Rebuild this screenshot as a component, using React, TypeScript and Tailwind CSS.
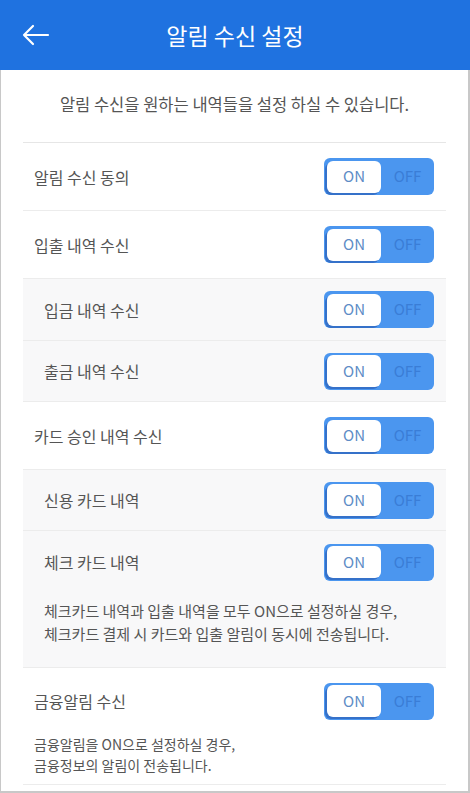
import React from "react";

function Toggle() {
  return (
    <div className="relative flex h-[37px] w-[110px] items-center rounded-[6px] bg-[#4b96ef]">
      <div className="ml-[3px] flex h-[32px] w-[54px] items-center justify-center rounded-[6px] bg-white text-[15px] text-[#5d8cc6] shadow-[-2px_2px_0_#3571c9]">
        ON
      </div>
      <div className="flex flex-1 items-center justify-center text-[15px] text-[#3a7dd6]">OFF</div>
    </div>
  );
}

function Row({
  label,
  sub,
  h,
  note,
}: {
  label: string;
  sub?: boolean;
  h: string;
  note?: React.ReactNode;
}) {
  return (
    <div className={`border-b border-[#ececec] ${sub ? "bg-[#f8f8f9]" : "bg-white"}`}>
      <div className={`flex items-center justify-between ${h} ${sub ? "pl-[21px]" : "pl-[11px]"} pr-[12px]`}>
        <span className="text-[16px] text-[#555]">{label}</span>
        <Toggle />
      </div>
      {note}
    </div>
  );
}

export default function App() {
  return (
    <div
      className="h-[793px] w-[470px] overflow-hidden bg-white"
      style={{ fontFamily: '"Noto Sans CJK KR", "Noto Sans", sans-serif' }}
    >
      <header className="flex h-[70px] items-center bg-[#1f72e0]">
        <div className="flex w-[60px] justify-start pl-[22px]">
          <svg width="28" height="22" viewBox="0 0 28 22" fill="none" stroke="white" strokeWidth="2.2" strokeLinecap="round" strokeLinejoin="round">
            <path d="M26 11H2M11 2L2 11l9 9" />
          </svg>
        </div>
        <h1 className="flex-1 text-center text-[23px] text-white">알림 수신 설정</h1>
        <div className="w-[60px]" />
      </header>
      <div className="h-[723px] border-x-2 border-b-2 border-[#c8c8c8] border-l-[1.5px]">
        <div className="mx-[22px]">
          <div className="flex h-[73px] items-center justify-center border-b border-[#e6e6e6] pb-[4px] text-[16.5px] text-[#555]">
            알림 수신을 원하는 내역들을 설정 하실 수 있습니다.
          </div>
          <Row label="알림 수신 동의" h="h-[67px]" />
          <Row label="입출 내역 수신" h="h-[67px]" />
          <Row label="입금 내역 수신" sub h="h-[61px]" />
          <Row label="출금 내역 수신" sub h="h-[60px]" />
          <Row label="카드 승인 내역 수신" h="h-[67px]" />
          <Row label="신용 카드 내역" sub h="h-[60px]" />
          <Row
            label="체크 카드 내역"
            sub
            h="h-[62px]"
            note={
              <div className="pb-[22px] pl-[21px] pt-[6px] text-[15px] leading-[23px] text-[#555]">
                체크카드 내역과 입출 내역을 모두 ON으로 설정하실 경우,
                <br />
                체크카드 결제 시 카드와 입출 알림이 동시에 전송됩니다.
              </div>
            }
          />
          <Row
            label="금융알림 수신"
            h="h-[66px]"
            note={
              <div className="pb-[8px] pl-[11px] text-[14px] leading-[21px] text-[#555]">
                금융알림을 ON으로 설정하실 경우,
                <br />
                금융정보의 알림이 전송됩니다.
              </div>
            }
          />
        </div>
      </div>
    </div>
  );
}
